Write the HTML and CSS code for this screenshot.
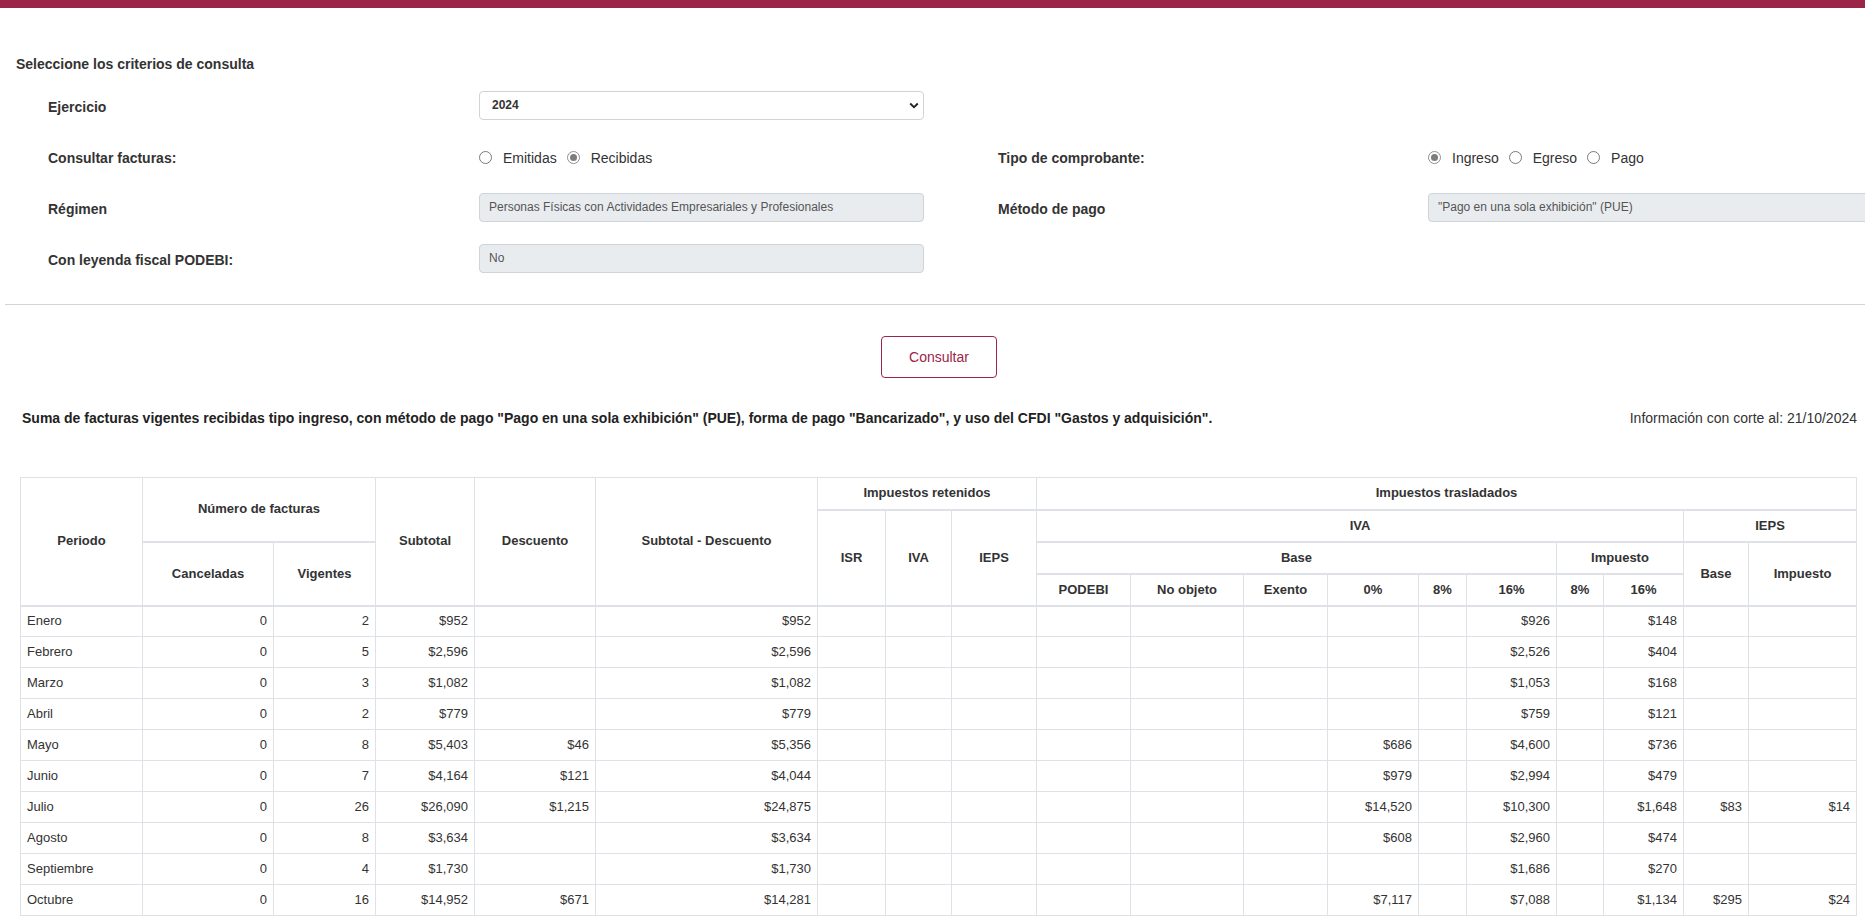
FILE: index.html
```html
<!DOCTYPE html>
<html lang="es">
<head>
<meta charset="utf-8">
<title>Consulta de facturas</title>
<link rel="stylesheet" href="styles.css">
</head>
<body>
<div class="topbar"></div>
<main class="page">
  <h2 class="criteria-title">Seleccione los criterios de consulta</h2>
  <div class="form-grid">
    <div class="lbl">Ejercicio</div>
    <div class="select-wrap">
      <select class="ctl select"><option>2024</option></select>
      <svg class="chev" width="10" height="7" viewBox="0 0 10 7"><path d="M1.2 1.5 L5 5.2 L8.8 1.5" fill="none" stroke="#222" stroke-width="1.8"/></svg>
    </div>
    <div></div>
    <div></div>

    <div class="lbl">Consultar facturas:</div>
    <div class="radios">
      <span class="radio"></span><span class="rtext">Emitidas</span>
      <span class="radio checked"></span><span class="rtext">Recibidas</span>
    </div>
    <div class="lbl">Tipo de comprobante:</div>
    <div class="radios">
      <span class="radio checked"></span><span class="rtext">Ingreso</span>
      <span class="radio"></span><span class="rtext">Egreso</span>
      <span class="radio"></span><span class="rtext">Pago</span>
    </div>

    <div class="lbl">Régimen</div>
    <div class="ctl ro">Personas Físicas con Actividades Empresariales y Profesionales</div>
    <div class="lbl">Método de pago</div>
    <div class="ctl ro">"Pago en una sola exhibición" (PUE)</div>

    <div class="lbl">Con leyenda fiscal PODEBI:</div>
    <div class="ctl ro">No</div>
    <div></div>
    <div></div>
  </div>
  <hr class="sep">
  <div class="actions"><button class="btn">Consultar</button></div>
  <div class="summary">
    <p class="summary-text">Suma de facturas vigentes recibidas tipo ingreso, con método de pago "Pago en una sola exhibición" (PUE), forma de pago "Bancarizado", y uso del CFDI "Gastos y adquisición".</p>
    <p class="cutoff">Información con corte al: 21/10/2024</p>
  </div>
  <table class="grid">
    <colgroup>
      <col style="width:122px"><col style="width:131px"><col style="width:102px"><col style="width:99px"><col style="width:121px"><col style="width:222px"><col style="width:68px"><col style="width:66px"><col style="width:85px"><col style="width:94px"><col style="width:113px"><col style="width:84px"><col style="width:91px"><col style="width:48px"><col style="width:90px"><col style="width:47px"><col style="width:80px"><col style="width:65px"><col style="width:108px">
    </colgroup>
    <thead>
      <tr>
        <th rowspan="4">Periodo</th>
        <th colspan="2" rowspan="2">Número de facturas</th>
        <th rowspan="4">Subtotal</th>
        <th rowspan="4">Descuento</th>
        <th rowspan="4">Subtotal - Descuento</th>
        <th colspan="3">Impuestos retenidos</th>
        <th colspan="10">Impuestos trasladados</th>
      </tr>
      <tr>
        <th rowspan="3">ISR</th>
        <th rowspan="3">IVA</th>
        <th rowspan="3">IEPS</th>
        <th colspan="8">IVA</th>
        <th colspan="2">IEPS</th>
      </tr>
      <tr>
        <th rowspan="2">Canceladas</th>
        <th rowspan="2">Vigentes</th>
        <th colspan="6">Base</th>
        <th colspan="2">Impuesto</th>
        <th rowspan="2">Base</th>
        <th rowspan="2">Impuesto</th>
      </tr>
      <tr>
        <th>PODEBI</th>
        <th>No objeto</th>
        <th>Exento</th>
        <th>0%</th>
        <th>8%</th>
        <th>16%</th>
        <th>8%</th>
        <th>16%</th>
      </tr>
    </thead>
    <tbody>
      <tr><td>Enero</td><td>0</td><td>2</td><td>$952</td><td></td><td>$952</td><td></td><td></td><td></td><td></td><td></td><td></td><td></td><td></td><td>$926</td><td></td><td>$148</td><td></td><td></td></tr>
      <tr><td>Febrero</td><td>0</td><td>5</td><td>$2,596</td><td></td><td>$2,596</td><td></td><td></td><td></td><td></td><td></td><td></td><td></td><td></td><td>$2,526</td><td></td><td>$404</td><td></td><td></td></tr>
      <tr><td>Marzo</td><td>0</td><td>3</td><td>$1,082</td><td></td><td>$1,082</td><td></td><td></td><td></td><td></td><td></td><td></td><td></td><td></td><td>$1,053</td><td></td><td>$168</td><td></td><td></td></tr>
      <tr><td>Abril</td><td>0</td><td>2</td><td>$779</td><td></td><td>$779</td><td></td><td></td><td></td><td></td><td></td><td></td><td></td><td></td><td>$759</td><td></td><td>$121</td><td></td><td></td></tr>
      <tr><td>Mayo</td><td>0</td><td>8</td><td>$5,403</td><td>$46</td><td>$5,356</td><td></td><td></td><td></td><td></td><td></td><td></td><td>$686</td><td></td><td>$4,600</td><td></td><td>$736</td><td></td><td></td></tr>
      <tr><td>Junio</td><td>0</td><td>7</td><td>$4,164</td><td>$121</td><td>$4,044</td><td></td><td></td><td></td><td></td><td></td><td></td><td>$979</td><td></td><td>$2,994</td><td></td><td>$479</td><td></td><td></td></tr>
      <tr><td>Julio</td><td>0</td><td>26</td><td>$26,090</td><td>$1,215</td><td>$24,875</td><td></td><td></td><td></td><td></td><td></td><td></td><td>$14,520</td><td></td><td>$10,300</td><td></td><td>$1,648</td><td>$83</td><td>$14</td></tr>
      <tr><td>Agosto</td><td>0</td><td>8</td><td>$3,634</td><td></td><td>$3,634</td><td></td><td></td><td></td><td></td><td></td><td></td><td>$608</td><td></td><td>$2,960</td><td></td><td>$474</td><td></td><td></td></tr>
      <tr><td>Septiembre</td><td>0</td><td>4</td><td>$1,730</td><td></td><td>$1,730</td><td></td><td></td><td></td><td></td><td></td><td></td><td></td><td></td><td>$1,686</td><td></td><td>$270</td><td></td><td></td></tr>
      <tr><td>Octubre</td><td>0</td><td>16</td><td>$14,952</td><td>$671</td><td>$14,281</td><td></td><td></td><td></td><td></td><td></td><td></td><td>$7,117</td><td></td><td>$7,088</td><td></td><td>$1,134</td><td>$295</td><td>$24</td></tr>
    </tbody>
  </table>
</main>
</body>
</html>
```

FILE: styles.css
```css
html, body {
  margin: 0;
  padding: 0;
  overflow: hidden;
  background: #fff;
}
body {
  font-family: "Liberation Sans", Arial, sans-serif;
  color: #333;
  font-size: 14px;
}
.topbar {
  height: 8px;
  background: #9d2449;
}
.page {
  display: block;
}
.criteria-title {
  margin: 46px 0 7px 16px;
  font-size: 14px;
  line-height: 20px;
  font-weight: bold;
  color: #333;
}
.form-grid {
  display: grid;
  grid-template-columns: 431px 519px 430px 445px;
  grid-auto-rows: 51px;
  align-items: center;
  padding-left: 48px;
  width: 1825px;
}
.lbl {
  font-weight: bold;
  font-size: 14px;
  line-height: 20px;
  color: #333;
}
.ctl {
  box-sizing: border-box;
  width: 445px;
  height: 29px;
  border: 1px solid #ced4da;
  border-radius: 4px;
  font-family: "Liberation Sans", Arial, sans-serif;
  font-size: 12px;
  line-height: 27px;
  color: #555;
}
.select-wrap {
  position: relative;
  width: 445px;
  height: 29px;
  margin-top: -3px;
}
.select {
  appearance: none;
  -webkit-appearance: none;
  background: #fff;
  padding: 0 12px;
  font-weight: bold;
  color: #333;
  display: block;
}
.chev {
  position: absolute;
  right: 5px;
  top: 11px;
}
.ro {
  background: #e9ecef;
  padding: 0 9px;
  white-space: nowrap;
  overflow: hidden;
  margin-top: -2px;
}
.radios {
  display: flex;
  align-items: center;
  font-size: 14px;
  line-height: 20px;
  color: #333;
}
.radio {
  box-sizing: border-box;
  width: 13px;
  height: 13px;
  border: 1px solid #7a7a7a;
  border-radius: 50%;
  background: #fff;
  margin-right: 11px;
  position: relative;
}
.radio.checked {
  border-color: #8f8f8f;
}
.radio.checked::after {
  content: "";
  position: absolute;
  left: 2px;
  top: 2px;
  width: 7px;
  height: 7px;
  border-radius: 50%;
  background: #7d7d7d;
}
.rtext {
  margin-right: 10px;
}
.sep {
  margin: 19px 0 0 5px;
  border: 0;
  border-top: 1px solid #d4d4d4;
  height: 0;
}
.actions {
  width: 1878px;
  display: flex;
  justify-content: center;
  margin-top: 31px;
}
.btn {
  box-sizing: border-box;
  width: 116px;
  height: 42px;
  border: 1px solid #9d2449;
  border-radius: 4px;
  background: #fff;
  color: #9d2449;
  font-family: "Liberation Sans", Arial, sans-serif;
  font-size: 14px;
}
.summary {
  display: flex;
  justify-content: space-between;
  align-items: center;
  margin: 30px 8px 0 22px;
  line-height: 20px;
}
.summary p {
  margin: 0;
}
.summary-text {
  font-weight: bold;
  color: #222;
}
.cutoff {
  color: #333;
}
.grid {
  margin: 49px 0 0 20px;
  width: 1836px;
  table-layout: fixed;
  border-collapse: collapse;
  font-size: 13px;
  color: #333;
}
.grid th, .grid td {
  border: 1px solid #dee2e6;
  line-height: 18px;
}
.grid th {
  font-weight: bold;
  text-align: center;
  vertical-align: middle;
  padding: 4px 5px;
  border-bottom: 2px solid #dee2e6;
}
.grid thead tr {
  height: 32px;
}
.grid td {
  padding: 4px 6px;
  text-align: right;
  vertical-align: middle;
  white-space: nowrap;
}
.grid td:first-child {
  text-align: left;
}
.grid tbody tr {
  height: 31px;
}
```
